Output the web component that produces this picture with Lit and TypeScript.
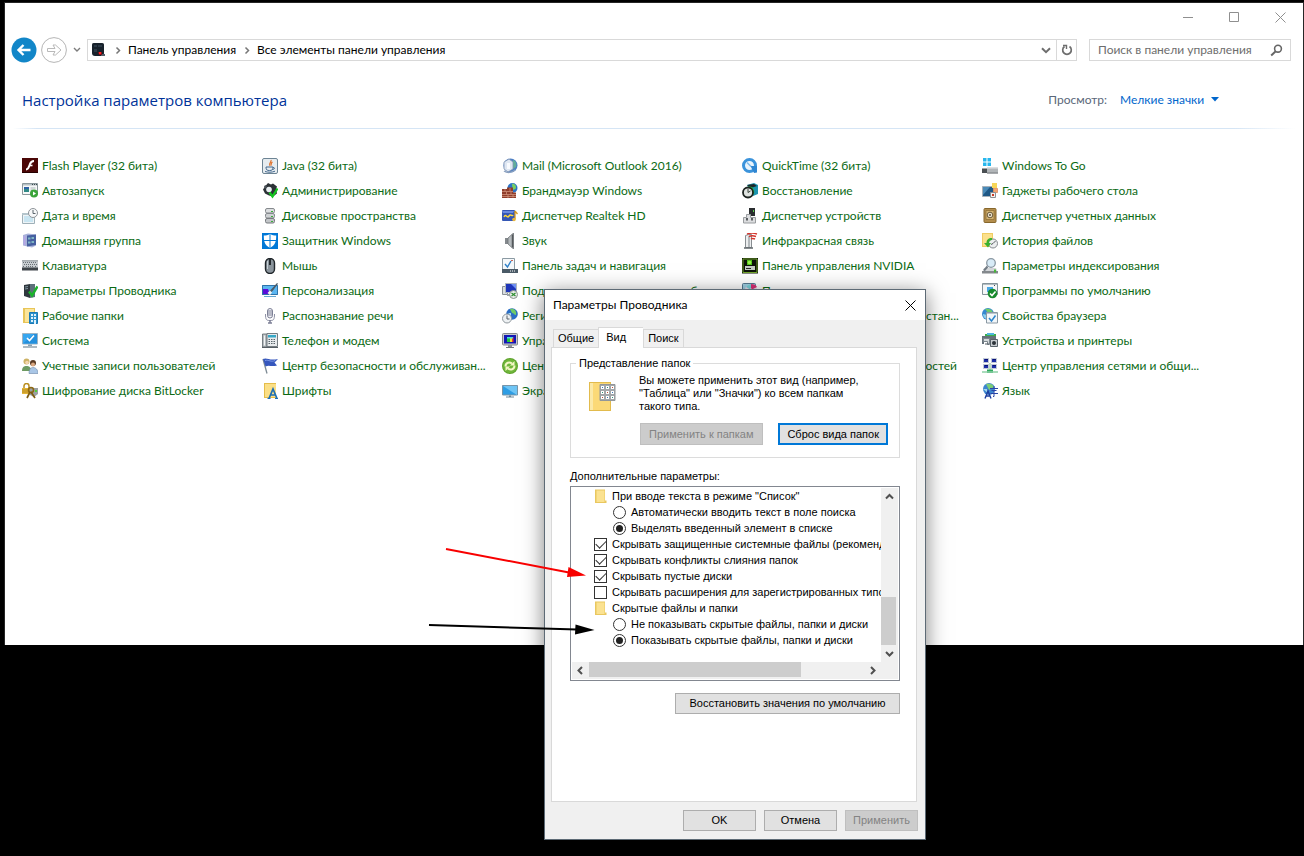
import { LitElement, html, svg, css, TemplateResult } from "lit";
import { customElement, state } from "lit/decorators.js";
import { classMap } from "lit/directives/class-map.js";

const ICONS: Record<string, TemplateResult> = {
  flash: svg`<path d="M0 0h16v15H0z" fill="#4b0707"/><path d="M0 14h16v1H0z" fill="#260000"/><path d="M12 3c-3 0-3.500 1.500-4.200 3.500S6.500 11.500 4 11.500" fill="none" stroke="#fff" stroke-width="2"/><path d="M7.500 7.500h3" stroke="#fff" stroke-width="1.600"/>`,
  autoplay: svg`<path d="M.5 .5h15v11H.5z" fill="#f7f8f8" stroke="#8b979b"/><path d="M1 1h14v1.500H1z" fill="#b5c0c4"/><path d="M10 1h1v1h-1zM12 1h1v1h-1zM14 1h1v1h-1z" fill="#3b4a50"/><path d="M2 4h5v5H2z" fill="#2f8a86"/><path d="M2 4h5v2H2z" fill="#2e62a5"/><path d="M8.500 5h5M8.500 7h2" stroke="#a9b4b8"/><circle cx="12" cy="10.500" r="4" fill="#3ba43a"/><path d="M11 8.500v4l3-2z" fill="#fff"/>`,
  clock: svg`<path d="M.5 5.500h12v10H.5z" fill="#eef4f7" stroke="#9fb0b8"/><path d="M0 5h8v2H0z" fill="#b5c5cc"/><path d="M2.500 9h8.500M2.500 11h8.500M2.500 13h8.500" stroke="#59b7df" stroke-dasharray="1 1"/><circle cx="11" cy="5" r="4.500" fill="#f7f8f9" stroke="#8d9398"/><path d="M11 2v3.500h2.500" fill="none" stroke="#5b656c"/>`,
  homegroup: svg`<path d="M1 2l5-1.500 8 1v11l-4 2-9-2z" fill="#a9b2da"/><path d="M5 2.500l9-1v10.500l-9 1.500z" fill="#465fa0"/><path d="M6 4.500h2.500v2H6zM9.500 4h2.500v2H9.500zM6 8.500h2.500v2H6zM9.500 8h2.500v2H9.500z" fill="#7fb5c4"/><path d="M2.500 3v9" stroke="#b7a5e6" stroke-width="1.500"/>`,
  keyboard: svg`<path d="M0 2.500h16v10H0z" fill="#3f454a"/><path d="M0 2.500h16v7H0z" fill="#c9ced2"/><path d="M1 4.500h14M2 6.500h13M1 8.500h2M4 8.500h8M13 8.500h2" stroke="#676f75" stroke-dasharray="1 1"/><path d="M0 3h16" stroke="#9ba2a7"/>`,
  explorer: svg`<path d="M2 2l6-1v14l-6-2z" fill="#2f383e"/><path d="M8 1h5v13l-5 1z" fill="#5c7079"/><path d="M3 4l3-.5M3 6l3-.5" stroke="#8295a0"/><path d="M7 8.500l3 4 5.500-9" fill="none" stroke="#1bb32a" stroke-width="2.400"/>`,
  workfolders: svg`<path d="M1 0h12v15H1z" fill="#e8c558"/><path d="M3 1h9v13H3z" fill="#fbe59a"/><path d="M7.500 4.500h8v11h-8z" fill="#2c90cb" stroke="#1a78b4"/><path d="M9 6h2v2H9zM12 6h2v2h-2zM9 9h2v2H9zM12 9h2v2h-2zM9 12h2v2H9zM12 12h2v4h-2z" fill="#dff2fc"/>`,
  system: svg`<path d="M.5 .5h15v10.500H.5z" fill="#37a6ef" stroke="#9db3c3"/><path d="M1 10.500L12 1h3v9.500z" fill="#2590dd"/><path d="M5 5l2.500 2.500L12 2.500" fill="none" stroke="#fff" stroke-width="1.600"/><path d="M6 11.500h4v1.500H6z" fill="#8aa1b1"/><path d="M1 13.500h14v1H1z" fill="#5a7485"/>`,
  users: svg`<circle cx="4.500" cy="3.500" r="3" fill="#cdb265"/><circle cx="5" cy="4.500" r="1.800" fill="#f3d5b0"/><path d="M0 13c0-4 2-5 4.500-5S9 9 9 13z" fill="#6d9a62"/><circle cx="11" cy="5" r="3" fill="#5a3b25"/><circle cx="11" cy="6.500" r="2" fill="#dba982"/><path d="M7 15.500c0-4 1.500-6 4-6s5 2 5 6z" fill="#a9c6e6" stroke="#6987a8" stroke-width=".6"/>`,
  bitlocker: svg`<path d="M2 5V3a2.500 2.500 0 0 1 5 0v2" fill="none" stroke="#b98d1f" stroke-width="1.500"/><path d="M0 5h9v6H0z" fill="#e3b537"/><path d="M0 7h9M0 9h9" stroke="#a4781b" stroke-width=".7"/><path d="M8 5h8v6l-4 3-4-2z" fill="#9ba1a3"/><path d="M13 7h2v2h-2z" fill="#52d038"/><circle cx="9" cy="7" r="2.500" fill="none" stroke="#8c6714" stroke-width="1.500"/><path d="M8 9l-3 6M9 9l4 6" stroke="#7e5c12" stroke-width="1.700"/>`,
  java: svg`<rect x=".5" y=".5" width="15" height="15" rx="1.500" fill="#e6ecf0" stroke="#6d8494"/><path d="M9 2c1 2-3 3-1 6M10.500 4C8.500 5 9.500 6 9 7.500" fill="none" stroke="#e0702a" stroke-width="1.200"/><path d="M4 9h7c0 3-1 3.500-3.500 3.500S4 12 4 9zM11 9.500c2-.5 2 2-.5 2" fill="none" stroke="#45698e"/><path d="M3 13.500c3 1 7 1 10-.3" fill="none" stroke="#45698e"/>`,
  admin: svg`<path d="M6 0l3 1.500L11 .5l4 3-1 3 1 4-4 3-4-1-4-2-2-4 2-3z" fill="#2c3136"/><circle cx="7" cy="6.500" r="2.800" fill="#e8eef1"/><path d="M2 3l2-1 1 2-2 2z" fill="#4a5259"/><path d="M7.500 9.500l3 4 5-8" fill="none" stroke="#14c71f" stroke-width="2.300"/>`,
  storage: svg`<rect x="3.500" y=".5" width="9" height="4.500" rx="1.500" fill="#dcdee0" stroke="#85898d"/><rect x="3.500" y="5.500" width="9" height="4.500" rx="1.500" fill="#cfd2d4" stroke="#85898d"/><rect x="3.500" y="10.500" width="9" height="4.500" rx="1.500" fill="#c2c5c8" stroke="#777b7f"/><path d="M9 3.500h2M9 8.500h2M9 13.500h2" stroke="#3cae3c"/>`,
  defender: svg`<path d="M0 0h16v16H0z" fill="#0078d7"/><path d="M8 .8c2 1.500 4 1.700 6.200 1.700 0 6.500-1 9.500-6.200 12.500-5.200-3-6.200-6-6.200-12.500C4 2.500 6 2.300 8 .8z" fill="#fff"/><path d="M8 0v16M1 7.500h14" stroke="#0078d7"/>`,
  mouse: svg`<rect x="3.500" y=".5" width="9" height="15" rx="4.500" fill="#8a949c" stroke="#20262b" stroke-width="1.400"/><path d="M5.500 3v8" stroke="#c6d0d6"/><path d="M8 1v6" stroke="#242a2f" stroke-width="2"/>`,
  personal: svg`<path d="M0 2h16v10H0z" fill="#5bb6f1"/><path d="M0 6h6l2 5.500H0z" fill="#5a0bd8"/><path d="M.5 2.500h15v9H.5z" fill="none" stroke="#2f73a8"/><path d="M6.500 9l3-3 5.500-6 1 .7L11 7.500l-3 3z" fill="#4e5c66"/><path d="M5.500 10L8 7.500l2 2L8 12z" fill="#f4f4f4"/><path d="M2 13.500h12" stroke="#65a7d0"/>`,
  speech: svg`<rect x="5.500" y=".5" width="5" height="9.500" rx="2.500" fill="#f3f3f7" stroke="#7d8096"/><path d="M5.500 3h5M5.500 5h5M5.500 7h5" stroke="#7d8096"/><path d="M3.500 6c0 6 1 6.500 4.500 6.500s4.500-.5 4.500-6.500" fill="none" stroke="#8d90a4"/><path d="M8 12v3M6 15h4" stroke="#7d8096" stroke-width="1.500"/>`,
  phone: svg`<path d="M.5 1h4.500v13H.5z" fill="#b6bcc0" stroke="#5c646a" stroke-width=".8"/><path d="M5 .5h10.500v13H5z" fill="#e8ebed" stroke="#757d82"/><path d="M6 2h8v2.500H6z" fill="#37a8c7"/><path d="M6.500 6.500h7M6.500 8.500h7M6.500 10.500h7" stroke="#59646b" stroke-dasharray="1.500 1"/><path d="M0 14h16v1H0z" fill="#565e64"/><path d="M2.500 2.500v10" stroke="#f2f4f5"/>`,
  flag: svg`<path d="M1 1l4 14.500" stroke="#7d8a94" stroke-width="1.300"/><path d="M1 1c4-2 6 2 15 0l-3.500 3.500 2.500 3c-6 1.500-8-1-11.500 1z" fill="#3657bd"/><path d="M3 2.500c4-1 6 2 10 0" fill="none" stroke="#7b97e6"/>`,
  fonts: svg`<path d="M2 0h12v15H2z" fill="#e5bd4a"/><path d="M3 1h11v13H3z" fill="#fbdf86"/><path d="M7 15.500L11 6l4 9.500M8 12h6" fill="none" stroke="#1d6fb4" stroke-width="1.700"/><path d="M5.500 15.500h3M13 15.500h3" stroke="#1d6fb4"/>`,
  mail: svg`<circle cx="8.500" cy="7.500" r="7" fill="#4d7fc4"/><path d="M11 2c3 1 4 4 3 7l-3 2z" fill="#5fae9a"/><path d="M2 4l5-3 4 3v7l-5 3-4-3z" fill="#dfe7f2" stroke="#8295b4" stroke-width=".8"/><path d="M5 5h3v6H5z" fill="#f9fbfe"/><path d="M2 13c3 2 8 2 11-1" fill="none" stroke="#8aa0bf" stroke-width="1.500"/>`,
  firewall: svg`<circle cx="10.500" cy="5" r="5" fill="#2b73c8"/><path d="M10 .5c3 0 5 3 3.500 5.500l-3 1z" fill="#77d062"/><path d="M0 6h5V4.500h6v5h3v5.500H0z" fill="#8f3d2b"/><path d="M0 8.500h11M0 11.500h14M0 13.500h14M3 6v2.500M8 5v3M4.500 9v2.500M9 9v2.500M6 12v3M11 11.500v3" stroke="#d99b83" stroke-width=".7"/>`,
  realtek: svg`<rect x="0" y="2" width="13" height="11" rx="1" fill="#3557b5"/><path d="M0 3h12l-1 2H1z" fill="#6c8be0"/><path d="M2 9c2-4 3 2 5-1s3 1 4-1" fill="none" stroke="#ffd93a" stroke-width="1.500"/><path d="M13 3v8M13 3l2.500 3" stroke="#d79a1f" stroke-width="1.300"/><circle cx="12" cy="11.500" r="1.800" fill="#e8b63e"/>`,
  sound: svg`<path d="M3 5h3v6H3z" fill="#84898d"/><path d="M6 5l5.500-5v16L6 11z" fill="#b4b9bc" stroke="#6e7377" stroke-width=".8"/><path d="M10.500 1.500v13" stroke="#55595c" stroke-width="1.500"/>`,
  taskbar: svg`<path d="M.5 .5h12v12H.5z" fill="#f5f8fa" stroke="#8b9aa3"/><path d="M3 6l2.500 3L9 3" fill="none" stroke="#2f80c8" stroke-width="1.400"/><path d="M9 2.500h2" stroke="#c8685a"/><path d="M0 11h16v4H0z" fill="#4a5a66"/><path d="M8 13h6" stroke="#fff" stroke-dasharray="1 1"/>`,
  remote: svg`<path d="M.5 3.500h5v8h-5z" fill="#d9dde0" stroke="#8a9196"/><path d="M3.500 .5h11v9h-11z" fill="#1e35b9" stroke="#aeb5bb"/><path d="M9 1h5v5z" fill="#6f8ff2"/><path d="M5 11h5v2H5z" fill="#9ea5aa"/><circle cx="11.500" cy="11.500" r="4" fill="#e9ece9" stroke="#8b938c"/><path d="M9.500 10l2 1.500-2 1.500M13.500 10l-2 1.500 2 1.500" fill="none" stroke="#2a8d2d" stroke-width="1.100"/>`,
  region: svg`<circle cx="10" cy="6" r="5.800" fill="#2b6dc5"/><path d="M8 1c4-1 7 2 6 6-2 0-2-2-4-2z" fill="#6fca67"/><path d="M6 5h3v3z" fill="#9bdcf5"/><circle cx="5" cy="10.500" r="4.500" fill="#eef1f3" stroke="#8f979d"/><path d="M5 7.500v3.500h2.500" fill="none" stroke="#58636b"/>`,
  color: svg`<rect x=".5" y=".5" width="15" height="11.500" rx="1" fill="#c8cbcf" stroke="#85898e"/><path d="M2 2h12v8.500H2z" fill="#1418b5"/><path d="M5 4h3v5H5z" fill="#21c83a"/><path d="M8 4h2v5H8z" fill="#e9e233"/><path d="M10 4h1.500v5H10z" fill="#e33"/><path d="M5 4h6v1.500H5z" fill="#49d7ea"/><path d="M6 12h4v2H6z" fill="#8f9398"/><path d="M4 14.500h8" stroke="#74787d"/>`,
  sync: svg`<circle cx="8" cy="8" r="8" fill="#5fa32d"/><circle cx="8" cy="8" r="7" fill="#6fb63a"/><path d="M3.500 8.500c0-4 4-5 6.500-3M12.500 7.500c0 4-4 5-6.500 3" fill="none" stroke="#f4f7c5" stroke-width="2"/><path d="M8 7.500h4.500V3zM8 8.500H3.500V13z" fill="#f4f7c5"/>`,
  display: svg`<path d="M.5 2.500h15v9.500H.5z" fill="#2e9de4" stroke="#7895a8"/><path d="M1 3h14v9z" fill="#6fc5f5"/><path d="M7 12.500h2v1.500H7z" fill="#6f8796"/><path d="M4 14h8" stroke="#6f8796"/>`,
  quicktime: svg`<circle cx="7.500" cy="7.500" r="6" fill="#eaf4fc" stroke="#3b93db" stroke-width="3"/><path d="M8.500 8h6.500v6.500l-3 .5z" fill="#2f86d2"/><path d="M5 4.500l4 4" stroke="#79b8ea" stroke-width="1.400"/>`,
  recovery: svg`<path d="M5 2l7-2 4 2v9l-5 2z" fill="#1b94b0"/><path d="M5 2l7-1 3 2-6 2z" fill="#1e2729"/><path d="M5 4c5-2 8 2 7 7l-3 1z" fill="#1fc33c"/><circle cx="6" cy="9.500" r="5" fill="#dfe3e0" stroke="#1d2420" stroke-width="1.800"/><path d="M6 6v3.500l2.500-1.500" fill="none" stroke="#3b443d"/>`,
  devmgr: svg`<path d="M7 0h6v8H7z" fill="#2a2d2f"/><path d="M11 2h1v2h-1z" fill="#5dd24d"/><path d="M1.500 9.500h3V6.500h4v3h5v5.500h-12z" fill="#dcdddf" stroke="#999c9f"/><path d="M4 10h2v2.500H4zM9 10h2v2.500H9z" fill="#5c6063"/>`,
  infrared: svg`<path d="M3.500 2.500l3-1h3v13h-6z" fill="#eceeef" stroke="#888d91"/><path d="M7 3v11" stroke="#b5babd" stroke-width="2"/><path d="M5 1c3-1 7-1 10 0M7 3.500c2-1 4-1 7 0M9 6c1-.7 2.500-.7 4 0" fill="none" stroke="#d4352d" stroke-width="1.400"/><path d="M2 15h9" stroke="#62686c" stroke-width="1.500"/>`,
  nvidia: svg`<path d="M0 0h16v15.500H0z" fill="#0c1208"/><path d="M1 1h14v13.500H1z" fill="none" stroke="#7db72f" stroke-width=".9"/><path d="M5 2h5v5H5z" fill="#4dc018"/><circle cx="7.500" cy="4.500" r="1.800" fill="#9bf14c"/><path d="M3 8h10v4H3z" fill="#c4cbc4"/><path d="M4 10.500h5" stroke="#22281f"/>`,
  programs: svg`<rect x=".5" y=".5" width="13" height="14" rx="1" fill="#9fd0e4" stroke="#567991"/><circle cx="9" cy="7" r="6" fill="#ecdff0"/><path d="M9 7V1c3 0 5 1 6 3z" fill="#dc2e74"/><path d="M9 7L4 4c1-2 3-3 5-3z" fill="#7bd4dc"/><circle cx="9" cy="7" r="1.500" fill="#fff"/>`,
  togo: svg`<path d="M1 0h3.500v3.500H1zM5.500 0H9v3.500H5.500zM1 4.500h3.500V8H1zM5.500 4.500H9V8H5.500z" fill="#28b7ed"/><path d="M0 10.500h6v4.500H0z" fill="#494e52"/><path d="M5 9.500h11v6H5z" fill="#b1b5b8"/><path d="M5 10h11" stroke="#e3e5e6"/><path d="M5 15h11" stroke="#777b7e"/>`,
  gadgets: svg`<path d="M.5 3.500h11v10H.5z" fill="#1f5886" stroke="#a7b1b9"/><path d="M1 4h7l-7 8z" fill="#4a8ab8"/><path d="M10 0h5v5h-5z" fill="#f7d659"/><path d="M11.500 5.500h4v4h-4z" fill="#f3a472" stroke="#d98250" stroke-width=".7"/><path d="M8.500 9.500h5v5h-5z" fill="#f4f2ef" stroke="#8b8f93"/><path d="M10 11h2v2h-2z" fill="#cc3b25"/>`,
  creds: svg`<rect x="2" y=".5" width="12" height="14" rx="1" fill="#b38d4c" stroke="#87672c"/><path d="M4 2.500h8v9H4z" fill="#d2b272" stroke="#8b6c33" stroke-width=".7"/><circle cx="8" cy="7" r="2.800" fill="#e9e0cb" stroke="#6c5a3a"/><circle cx="8" cy="7" r="1" fill="#5e5238"/>`,
  history: svg`<path d="M0 0h11v14H0z" fill="#f0cc62"/><path d="M1 1h9v12H1z" fill="#fbe08c"/><circle cx="11" cy="10.500" r="4.500" fill="#eceeef" stroke="#84898d"/><path d="M11 10.500l2.500-2.500M11 10.500l-2 1" stroke="#555b60"/><path d="M10 5C6 5 4.500 7 4.500 10H2l4 4.500 3-4.500H7c0-2 1-3 3-3z" fill="#3bb02f"/>`,
  indexing: svg`<path d="M2 10h12l2 5H0z" fill="#d3d6d9"/><path d="M0 13h16v2.500H0z" fill="#84898d"/><path d="M12 11.500h2v3h-2z" fill="#46b739"/><path d="M5.500 8.500L2 12.500" stroke="#717b84" stroke-width="2"/><circle cx="9" cy="5" r="4.300" fill="#d8ebf7" stroke="#8a98a3" stroke-width="1.300"/>`,
  defaults: svg`<path d="M.5 .5h15v11H.5z" fill="#f5f7f8" stroke="#85939a"/><path d="M1 1.500h14" stroke="#b2bdc2"/><path d="M5 4h6v5H5z" fill="#4aa8e6"/><path d="M12 2h1v1h-1z" fill="#3c4a52"/><circle cx="10.500" cy="10.500" r="4.800" fill="#178a2c"/><path d="M8 10.500l2 2 3.500-4" fill="none" stroke="#fff" stroke-width="1.600"/>`,
  internet: svg`<circle cx="6" cy="6" r="6" fill="#3688cf"/><path d="M3 1c4-1 7 0 8 4l-4 1z" fill="#6ecc6a"/><path d="M1 6l4 1 1 4c-3 0-5-2-5-5z" fill="#8fd0ee"/><path d="M4.500 4.500h11v10.500h-11z" fill="#f2f6f9" stroke="#8a98a2"/><path d="M5 5.500h10" stroke="#bac5cc"/><path d="M7 10l2.500 3 4-5.500" fill="none" stroke="#2c84cb" stroke-width="1.500"/>`,
  printers: svg`<path d="M3 1h11v3H3z" fill="#3cae4e"/><path d="M5 0h7v2H5z" fill="#4fb8e0"/><path d="M0 3h14v4H2v4H0z" fill="#66717a"/><path d="M1.500 5.500h6v6h-2v-3h-4z" fill="#d4d9dc" stroke="#7c868d"/><path d="M8.500 6.500h7v7h-7z" fill="#c7ccd0" stroke="#596269"/><circle cx="12" cy="10" r="2" fill="#2b3238"/><path d="M3 11h4" stroke="#566068"/>`,
  network: svg`<path d="M1 0h6v5H1zM9 0h6v5H9zM1 6h6v5H1zM9 6h6v5H9z" fill="#c2cad6"/><path d="M2 1h4v3H2zM10 1h4v3h-4zM2 7h4v3H2zM10 7h4v3h-4z" fill="#1d2fa6"/><path d="M3 1h3v1H3zM11 1h3v1h-3zM3 7h3v1H3zM11 7h3v1h-3z" fill="#0a1174"/><path d="M8 5v7" stroke="#7cb98a"/><path d="M5 11.500h6v3.500H5z" fill="#2fa95e"/><path d="M0 14h16" stroke="#8ed0a6" stroke-width="1.500"/>`,
  language: svg`<circle cx="7" cy="6" r="6" fill="#3d85cf"/><path d="M4 1c4-1 7 0 8 3l-5 3z" fill="#7bcc74"/><path d="M1 6l4 0 1 4z" fill="#a1d9ef"/><path d="M3 15.500L6 8l3 7.500M4 13h4" fill="none" stroke="#1f3f9f" stroke-width="1.400"/><path d="M12 3v2M8 5.500h8M9.500 7.500h5M12 7v6.500M8.500 10.500h7.500M11 13.500h1" stroke="#2a46a6" fill="none"/>`,
  troubleshoot: svg`<path d="M1 2h14v9H1z" fill="#3a8fd0"/><path d="M4 13h8v1H4z" fill="#889"/>`,
  power: svg`<path d="M3 4h10v9H3z" fill="#6db33f"/><path d="M6 2h4v2H6z" fill="#888"/>`,
  backup: svg`<path d="M2 3h12v10H2z" fill="#7c9"/><path d="M4 5h8v2H4z" fill="#fff"/>`,
  access: svg`<circle cx="8" cy="8" r="7" fill="#2a7fd0"/><path d="M8 4v8M4 8h8" stroke="#fff" stroke-width="1.500"/>`,
  folder: svg`<path d="M2.500 1.500h10v11H14V15H2.500z" fill="#e9c75f"/><path d="M4 2.500h8v11.500H4z" fill="#fbe291"/>`,
  panel: svg`<path d="M1 3c0-2 1-2 3-2h7c2 0 2 1 2 3v7c0 2-1 3-3 3H4c-2 0-3-1-3-3z" fill="#18222c"/><path d="M3 3h3v2H3zM7 3h4v2H7zM3 7h3v3H3z" fill="#2b3946"/><path d="M10 12h4v2h-4z" fill="#55606a"/><path d="M7 10h4v3H8z" fill="#7d1218"/><path d="M8 10h2v2H8z" fill="#f22"/>`,
};

const icon = (name: string) => html`<svg class="icon" viewBox="0 0 16 16" aria-hidden="true">${ICONS[name]}</svg>`;

const ITEMS: [string, string][] = [
  ["flash", "Flash Player (32 бита)"], ["java", "Java (32 бита)"], ["mail", "Mail (Microsoft Outlook 2016)"], ["quicktime", "QuickTime (32 бита)"], ["togo", "Windows To Go"],
  ["autoplay", "Автозапуск"], ["admin", "Администрирование"], ["firewall", "Брандмауэр Windows"], ["recovery", "Восстановление"], ["gadgets", "Гаджеты рабочего стола"],
  ["clock", "Дата и время"], ["storage", "Дисковые пространства"], ["realtek", "Диспетчер Realtek HD"], ["devmgr", "Диспетчер устройств"], ["creds", "Диспетчер учетных данных"],
  ["homegroup", "Домашняя группа"], ["defender", "Защитник Windows"], ["sound", "Звук"], ["infrared", "Инфракрасная связь"], ["history", "История файлов"],
  ["keyboard", "Клавиатура"], ["mouse", "Мышь"], ["taskbar", "Панель задач и навигация"], ["nvidia", "Панель управления NVIDIA"], ["indexing", "Параметры индексирования"],
  ["explorer", "Параметры Проводника"], ["personal", "Персонализация"], ["remote", "Подключения к удаленным рабоч..."], ["programs", "Программы и компоненты"], ["defaults", "Программы по умолчанию"],
  ["workfolders", "Рабочие папки"], ["speech", "Распознавание речи"], ["region", "Региональные стандарты"], ["backup", "Резервное копирование и восстан..."], ["internet", "Свойства браузера"],
  ["system", "Система"], ["phone", "Телефон и модем"], ["color", "Управление цветом"], ["troubleshoot", "Устранение неполадок"], ["printers", "Устройства и принтеры"],
  ["users", "Учетные записи пользователей"], ["flag", "Центр безопасности и обслуживан..."], ["sync", "Центр синхронизации"], ["access", "Центр специальных возможностей"], ["network", "Центр управления сетями и общи..."],
  ["bitlocker", "Шифрование диска BitLocker"], ["fonts", "Шрифты"], ["display", "Экран"], ["power", "Электропитание"], ["language", "Язык"],
];

const base = css`
  :host, * { box-sizing: border-box; }
  button { font: inherit; color: inherit; margin: 0; padding: 0; border: 0; background: none; }
  svg { display: block; fill: none; }
  .icon { width: 16px; height: 16px; flex: none; }
`;

@customElement("control-panel")
class ControlPanel extends LitElement {
  static styles = [base, css`
    :host { display: block; background: #fff; border: 1px solid #262626; border-bottom: 0; padding-bottom: 242px; font: 12px/16px Lato, "Open Sans", sans-serif; color: #000; }
    .caption { display: flex; justify-content: flex-end; height: 28px; }
    .caption button { width: 46px; display: grid; place-items: center; color: #8f8f8f; }
    .nav { display: flex; align-items: center; height: 38px; padding: 0 12px 0 6px; }
    .round { width: 26px; height: 26px; margin-right: 4px; }
    .recent { width: 12px; height: 22px; margin-right: 4px; display: grid; place-items: center; }
    .address { flex: 1; display: flex; align-items: center; height: 22px; border: 1px solid #d9d9d9; padding-left: 3px; }
    .address a { color: #000; text-decoration: none; }
    .address .current { flex: 1; }
    .crumb { width: 21px; display: grid; place-items: center; }
    .address button { width: 20px; height: 20px; display: grid; place-items: center; }
    .address .refresh { border-left: 1px solid #d9d9d9; }
    .search { display: flex; align-items: center; width: 202px; height: 22px; margin-left: 12px; border: 1px solid #d9d9d9; padding: 0 7px 0 8px; }
    .search input { flex: 1; min-width: 0; border: 0; outline: 0; padding: 0; font: inherit; background: none; }
    .search input::placeholder { color: #6d6d6d; opacity: 1; }
    .head { display: flex; align-items: center; justify-content: space-between; height: 59px; padding: 2px 84px 0 17px; }
    h1 { margin: 0; font: 400 15px/22px "Open Sans", "Noto Sans", sans-serif; color: #003399; }
    .view { display: flex; align-items: center; color: #5a6779; }
    .view label { margin-right: 13px; }
    .view select { appearance: none; border: 0; padding: 0; background: none; font: inherit; color: #0066cc; margin-right: 6px; }
    .rule { height: 1px; margin: 0 8px; background: linear-gradient(90deg, #fff, #d5e5f5 24px, #d5e5f5 calc(100% - 60px), #fff); }
    ul { list-style: none; margin: 0; padding: 24px 17px 0; display: grid; grid-template-columns: repeat(auto-fill, 240px); grid-auto-rows: 25px; }
    li a { display: flex; align-items: center; gap: 4px; height: 25px; color: #0b6a14; text-decoration: none; white-space: nowrap; }
  `];
  render() {
    const chev = html`<span class="crumb"><svg width="6" height="9"><path d="M1.500 1.500l3 3-3 3" stroke="#777" stroke-width="1.500"/></svg></span>`;
    return html`
      <div class="caption">
        <button aria-label="Свернуть"><svg width="11" height="11"><path d="M0 5.500h10" stroke="currentColor"/></svg></button>
        <button aria-label="Развернуть"><svg width="11" height="11"><path d="M.5 .5h9v9h-9z" stroke="currentColor"/></svg></button>
        <button aria-label="Закрыть"><svg width="11" height="11"><path d="M.5 .5l10 10M10.500 .5l-10 10" stroke="currentColor"/></svg></button>
      </div>
      <nav class="nav">
        <button class="round" aria-label="Назад"><svg width="26" height="26"><circle cx="13" cy="13" r="12.500" fill="#1286c8"/><path d="M19.500 13H8M12.500 8l-5 5 5 5" stroke="#fff" stroke-width="2.400"/></svg></button>
        <button class="round" aria-label="Вперед"><svg width="26" height="26"><circle cx="13" cy="13" r="12.400" fill="#fff" stroke="#b5b5b5"/><path d="M6.500 11.500h7.500l-2-3.500h2.500l5.500 5-5.500 5H12l2-3.500H6.500z" stroke="#b9b9b9"/></svg></button>
        <button class="recent" aria-label="Последние расположения"><svg width="8" height="6"><path d="M1 1l3 3 3-3" stroke="#7c7c7c" stroke-width="1.400"/></svg></button>
        <div class="address">
          ${icon("panel")}
          ${chev}
          <a href="#panel">Панель управления</a>
          ${chev}
          <a class="current" href="#all">Все элементы панели управления</a>
          <button aria-label="Предыдущие расположения"><svg width="10" height="7"><path d="M1 1.200l4 4 4-4" stroke="#6e6e6e" stroke-width="2"/></svg></button>
          <button class="refresh" aria-label="Обновить"><svg width="12" height="12"><path d="M3.500 2.500a4.300 4.300 0 1 0 5 0" stroke="#6e6e6e" stroke-width="1.700"/><path d="M2 1.500h3.500V5" stroke="#6e6e6e" stroke-width="1.400"/></svg></button>
        </div>
        <div class="search">
          <input type="search" aria-label="Поиск в панели управления" placeholder="Поиск в панели управления" />
          <svg width="13" height="13"><circle cx="8" cy="4.700" r="3.400" stroke="#666" stroke-width="1.600"/><path d="M5.700 7.200L1.200 11.500" stroke="#666" stroke-width="2"/></svg>
        </div>
      </nav>
      <header class="head">
        <h1>Настройка параметров компьютера</h1>
        <div class="view">
          <label for="view">Просмотр:</label>
          <select id="view"><option>Мелкие значки</option></select>
          <svg width="8" height="5"><path d="M0 0h8L4 4.500z" fill="#0066cc"/></svg>
        </div>
      </header>
      <div class="rule"></div>
      <ul>${ITEMS.map(([name, text]) => html`<li><a href="#${name}">${icon(name)}<span>${text}</span></a></li>`)}</ul>`;
  }
}

type Row = { kind: "folder" | "radio" | "check"; text: string; group?: string; on?: boolean };

@customElement("folder-options")
class FolderOptions extends LitElement {
  @state() rows: Row[] = [
    { kind: "folder", text: 'При вводе текста в режиме "Список"' },
    { kind: "radio", group: "typing", text: "Автоматически вводить текст в поле поиска" },
    { kind: "radio", group: "typing", text: "Выделять введенный элемент в списке", on: true },
    { kind: "check", text: "Скрывать защищенные системные файлы (рекомендуется)", on: true },
    { kind: "check", text: "Скрывать конфликты слияния папок", on: true },
    { kind: "check", text: "Скрывать пустые диски", on: true },
    { kind: "check", text: "Скрывать расширения для зарегистрированных типов файлов" },
    { kind: "folder", text: "Скрытые файлы и папки" },
    { kind: "radio", group: "hidden", text: "Не показывать скрытые файлы, папки и диски" },
    { kind: "radio", group: "hidden", text: "Показывать скрытые файлы, папки и диски", on: true },
  ];
  static styles = [base, css`
    :host { display: flex; flex-direction: column; background: #f0f0f0; border: 1px solid #5d6a75; box-shadow: 0 4px 20px rgba(0, 0, 0, .5); font: 11px/13px "Liberation Sans", Arial, sans-serif; color: #000; }
    .title { display: flex; align-items: center; justify-content: space-between; height: 30px; padding: 0 9px 0 8px; background: #fff; font: 12px/16px Lato, "Open Sans", sans-serif; }
    .body { padding: 7px 8px 0 6px; }
    .tabs { display: flex; align-items: flex-end; padding-left: 2px; }
    .tabs button { height: 18px; padding: 0 4px; border: 1px solid #d9d9d9; border-bottom: 0; border-right: 0; line-height: 17px; }
    .tabs button:last-child { border-right: 1px solid #d9d9d9; }
    .tabs .on { height: 21px; width: 45px; margin-bottom: -1px; padding: 0 0 2px 7px; background: #fff; text-align: left; position: relative; }
    .panel { border: 1px solid #d9d9d9; background: #fff; min-height: 455px; padding: 9px 16px 16px 18px; }
    fieldset { margin: 0; min-width: 0; border: 1px solid #dcdcdc; padding: 4px 11px 12px 17px; display: grid; grid-template-columns: 51px 1fr; }
    legend { margin-left: -12px; padding: 0 3px; }
    .views { margin-top: 8px; }
    p { margin: 0; padding-right: 20px; }
    .pair { display: flex; justify-content: space-between; margin: 10px 0 0 1px; }
    .btn { height: 21px; border: 1px solid #adadad; background: #e1e1e1; white-space: nowrap; }
    .btn:disabled { color: #838383; background: #ccc; border-color: #bfbfbf; }
    .pair .btn { height: 22px; padding: 0 8px; }
    .pair .focus { border: 2px solid #0078d7; padding: 0 7px; }
    .label { margin: 12px 0 3px; }
    .box { display: grid; grid-template: 174px 17px / 1fr 17px; border: 1px solid #828790; padding: 1px; }
    .rows { overflow: hidden; min-width: 0; padding-left: 22px; }
    .row { display: flex; align-items: center; gap: 5px; height: 16px; white-space: nowrap; }
    .row.radio { padding-left: 19px; }
    .row svg { flex: none; }
    input { appearance: none; flex: none; width: 13px; height: 13px; margin: 0; border: 1px solid #333; background: #fff; display: grid; place-items: center; }
    input[type="radio"] { border-radius: 50%; }
    input[type="radio"]:checked::before { content: ""; width: 7px; height: 7px; border-radius: 50%; background: #222; }
    input[type="checkbox"]:checked::before { content: ""; width: 9px; height: 5px; border: solid #333; border-width: 0 0 1px 1px; transform: translateY(-1px) rotate(-45deg); }
    .bar { background: #f0f0f0; display: flex; align-items: center; }
    .bar.v { flex-direction: column; }
    .bar button { width: 17px; height: 17px; display: grid; place-items: center; flex: none; }
    .track { flex: 1; display: flex; align-self: stretch; }
    .v .track { flex-direction: column; justify-content: flex-end; }
    .thumb { background: #cdcdcd; }
    .v .thumb { height: 34%; margin-right: 2px; }
    .h .thumb { width: 77%; margin-bottom: 2px; }
    .corner { background: #f0f0f0; }
    .restore { display: block; margin: 12px 0 0 auto; width: 225px; }
    .footer { display: flex; justify-content: flex-end; gap: 8px; padding: 8px 7px; }
    .footer .btn { width: 73px; }
  `];
  render() {
    const arrow = (d: string) => html`<svg width="9" height="9"><path d=${d} stroke="#505050" stroke-width="2"/></svg>`;
    const dots = [0, 1, 2].flatMap(r => [0, 1, 2].map(c => svg`<rect x=${13 + c * 5} y=${4 + r * 5} width="3" height="3" fill="#fff"/><rect x=${14 + c * 5} y=${5 + r * 5} width="1" height="1" fill=${["#3a77b8", "#2f8f79", "#c0503a"][(r + c) % 3]}/>`));
    return html`
      <div class="title"><span>Параметры Проводника</span><button aria-label="Закрыть"><svg width="11" height="11"><path d="M.5 .5l10 10M10.500 .5l-10 10" stroke="#000"/></svg></button></div>
      <div class="body">
        <div class="tabs" role="tablist"><button role="tab">Общие</button><button role="tab" class="on" aria-selected="true">Вид</button><button role="tab">Поиск</button></div>
        <div class="panel">
          <fieldset>
            <legend>Представление папок</legend>
            <svg class="views" width="30" height="30"><path d="M1 0h22v29H1z" fill="#e2bb4d"/><path d="M2 1h3v27H2z" fill="#fbe9a8"/><path d="M5 1h17v27H5z" fill="#fbd977"/><path d="M12 2.500h15v16H12z" fill="#a3a7aa" stroke="#92979a"/>${dots}</svg>
            <div>
              <p>Вы можете применить этот вид (например, "Таблица" или "Значки") ко всем папкам такого типа.</p>
              <div class="pair"><button class="btn" disabled>Применить к папкам</button><button class="btn focus">Сброс вида папок</button></div>
            </div>
          </fieldset>
          <div class="label" id="more">Дополнительные параметры:</div>
          <div class="box" role="group" aria-labelledby="more">
            <div class="rows">${this.rows.map(r => r.kind === "folder"
              ? html`<div class="row"><svg width="13" height="14" viewBox="1.500 1 13 14" aria-hidden="true">${ICONS.folder}</svg><span>${r.text}</span></div>`
              : html`<label class=${classMap({ row: true, radio: r.kind === "radio" })}><input type=${r.kind === "radio" ? "radio" : "checkbox"} name=${r.group ?? r.text} .checked=${!!r.on} /><span>${r.text}</span></label>`)}</div>
            <div class="bar v"><button aria-label="Вверх">${arrow("M1 6.500l3.500-3.500 3.500 3.500")}</button><div class="track"><div class="thumb"></div></div><button aria-label="Вниз">${arrow("M1 3l3.500 3.500L8 3")}</button></div>
            <div class="bar h"><button aria-label="Влево">${arrow("M6 1L2.500 4.500 6 8")}</button><div class="track"><div class="thumb"></div></div><button aria-label="Вправо">${arrow("M3 1l3.500 3.500L3 8")}</button></div>
            <div class="corner"></div>
          </div>
          <button class="btn restore">Восстановить значения по умолчанию</button>
        </div>
      </div>
      <div class="footer"><button class="btn">OK</button><button class="btn">Отмена</button><button class="btn" disabled>Применить</button></div>`;
  }
}

@customElement("app-root")
class AppRoot extends LitElement {
  static styles = css`
    :host { display: block; position: relative; min-height: 100vh; background: #000; overflow: hidden; padding: 2px 0 0 4px; box-sizing: border-box; }
    folder-options { position: absolute; left: 544px; top: 289px; width: 382px; }
    .marks { position: absolute; left: 420px; top: 540px; width: 180px; height: 100px; pointer-events: none; }
  `;
  render() {
    return html`
      <control-panel></control-panel>
      <folder-options role="dialog" aria-label="Параметры Проводника"></folder-options>
      <svg class="marks" viewBox="420 540 180 100" aria-hidden="true">
        <path d="M446 549l123 23.500" stroke="#f80000" stroke-width="2"/><path d="M586 575.500l-17.500-8.500-1.500 10z" fill="#f80000"/>
        <path d="M429 625l148 4.500" stroke="#000" stroke-width="2"/><path d="M594.500 630l-19-5.500-.5 10z" fill="#000"/>
      </svg>`;
  }
}
